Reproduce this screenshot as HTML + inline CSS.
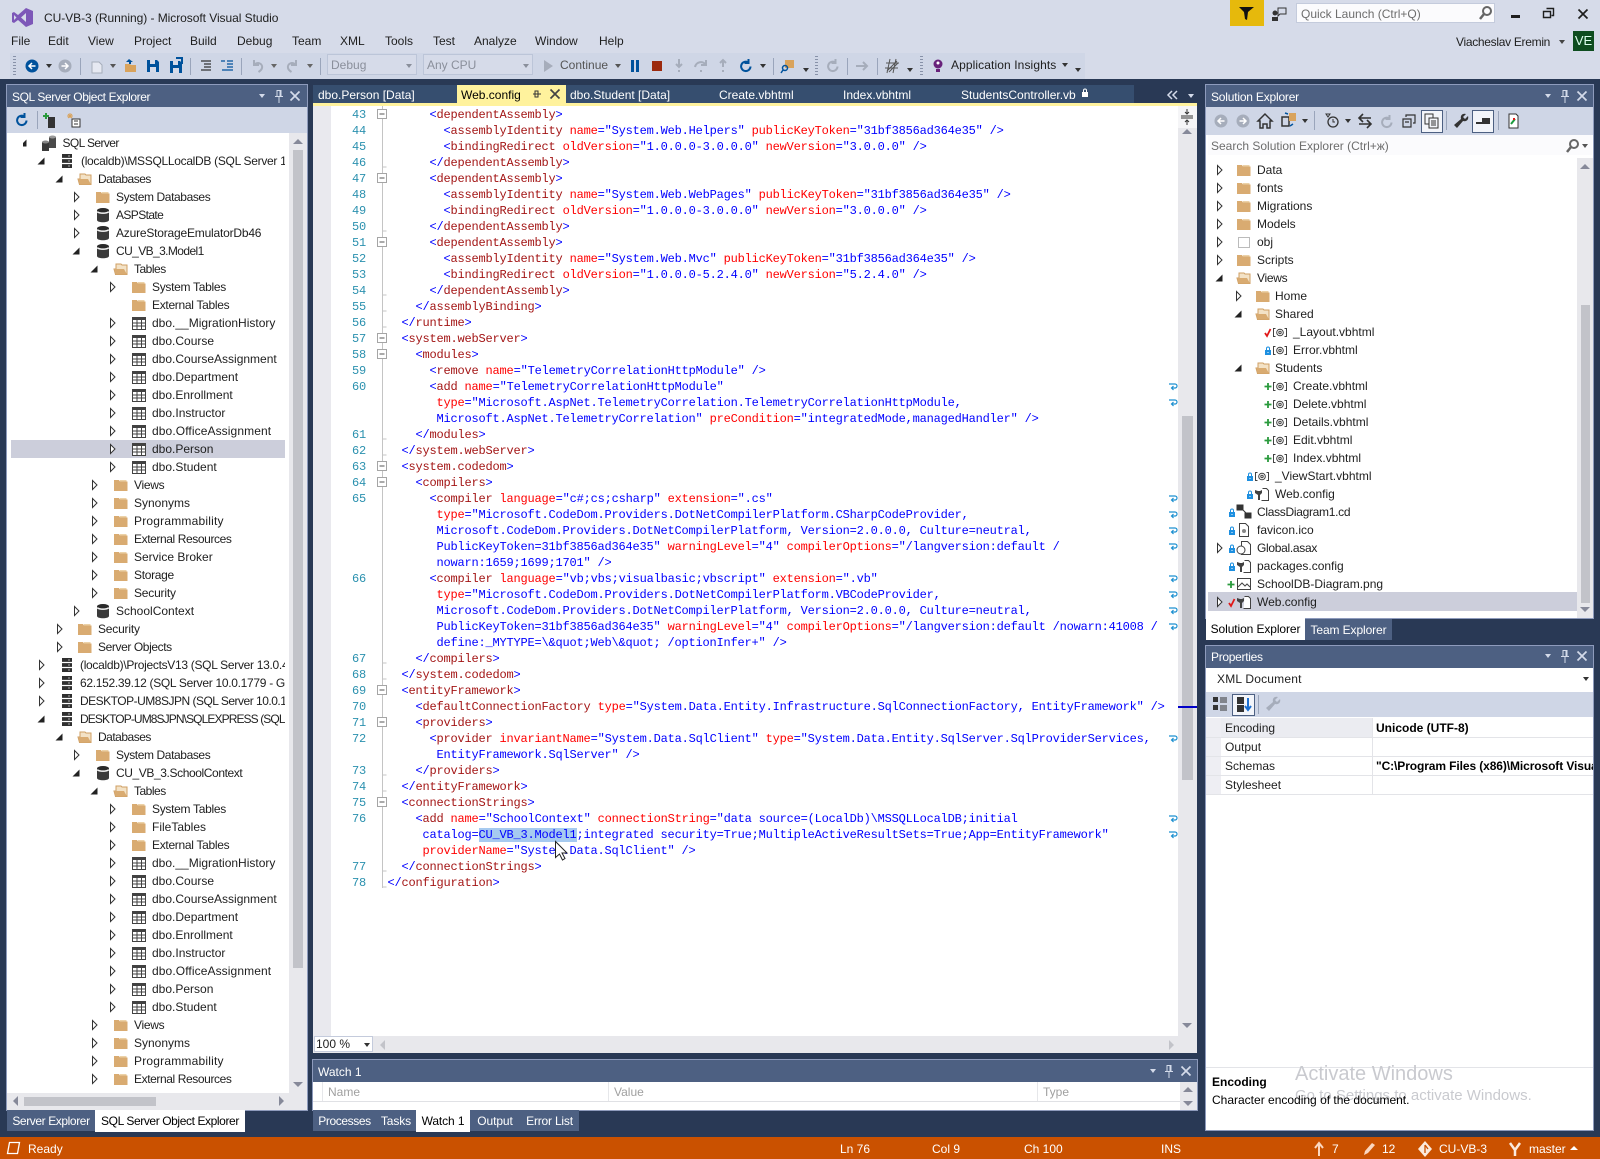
<!DOCTYPE html>
<html><head><meta charset="utf-8"><title>CU-VB-3 (Running) - Microsoft Visual Studio</title>
<style>
html,body{margin:0;padding:0;width:1600px;height:1159px;overflow:hidden;background:#293955}
body{position:relative;font:12px/16px "Liberation Sans",sans-serif;color:#1e1e1e}
.a,.w{position:absolute;white-space:pre}
.p{position:absolute}
svg{position:absolute;overflow:visible}
.ti{position:absolute;height:22px;background:#4d6082;color:#fff;line-height:22px;padding-left:5px;box-sizing:border-box;white-space:pre}
.ti.d{line-height:24px}
.bd{position:absolute;background:#fff;box-shadow:0 0 0 1px #8e9bbc}
.tr>div{position:relative;height:18px;line-height:18px;white-space:pre}
.tr svg{top:1px}
.tr b{font-weight:normal;position:absolute;top:0}
.tr b.n2{letter-spacing:-.2px}.tr b.n3{letter-spacing:-.3px}.tr b.n4{letter-spacing:-.4px}.tr b.n5{letter-spacing:-.5px}.tr b.n6{letter-spacing:-.6px}.tr b.n9{letter-spacing:-.9px}
.tab{position:absolute;top:1110px;height:21px;line-height:23px;color:#fff;background:#4d6082;white-space:pre;text-align:center;letter-spacing:-.1px}
.tab.on{background:#fff;color:#000;top:1110px;height:22px}
.code{position:absolute;left:387.5px;top:107px;font:12px/16px "Liberation Mono",monospace;letter-spacing:-.2px;color:#00f}
.code div{height:16px;white-space:pre;position:relative}
.code b{font-weight:normal;color:#a31515}
.code u{text-decoration:none;color:#f00}
.code em{font-style:normal;position:absolute;right:100%;margin-right:21.5px;color:#2b91af}
.code mark{background:#a6caf0;color:#00f}
.st{position:absolute;top:1141px;color:#fff;white-space:pre}
.pr{position:absolute;left:1225px;height:19px;line-height:20px;white-space:pre}
.pv{position:absolute;left:1376px;height:19px;line-height:20px;white-space:pre;font-weight:bold;width:217px;overflow:hidden;color:#000}
</style></head><body>
<svg width="0" height="0" style="position:absolute">
<symbol id="dd" overflow="visible"><path d="M5 6h6l-3 4z" fill="currentColor"/></symbol>
<symbol id="pin" overflow="visible"><path d="M6 2.5h4v6H6zM4 8.500h8M8 9v6M9 3v5" fill="none" stroke="currentColor"/></symbol>
<symbol id="xx" overflow="visible"><path d="M3.500 3.500l9 9M12.500 3.500l-9 9" fill="none" stroke="currentColor" stroke-width="1.700"/></symbol>
<symbol id="ac" overflow="visible"><path d="M6.500 3.500l4.500 4.500-4.500 4.500z" fill="#fff" stroke="#333"/></symbol>
<symbol id="ao" overflow="visible"><path d="M11.500 4.500v7h-7z" fill="#222"/></symbol>
<symbol id="f" overflow="visible"><path d="M1 3h5l1 1.500h7.500V14H1z" fill="#d9ab71"/><path d="M7 3h6.500v1.500H7z" fill="#ecd2a8"/></symbol>
<symbol id="fo" overflow="visible"><path d="M3 3h5l1 1h5v9.500H2.500L1 8h2z" fill="#f3e2c6" stroke="#cf9f63"/><path d="M1 8h10l3 5.500H3z" fill="#d9ab71"/></symbol>
<symbol id="db" overflow="visible"><ellipse cx="8" cy="3.500" rx="6" ry="2.500" fill="#2a2a2a"/><path d="M2 5v8c0 3 12 3 12 0V5c0 2.500-12 2.500-12 0z" fill="#3a3a3a"/><path d="M3 4.800c2 1.500 8 1.500 10 0" stroke="#eee" fill="none"/></symbol>
<symbol id="tb" overflow="visible"><path d="M1.500 2.500h13v12h-13z" fill="#fff" stroke="#424242"/><path d="M1 2h14v3H1z" fill="#424242"/><path d="M6 2v12M10.500 2v12M2 8h12M2 11h12" stroke="#424242"/></symbol>
<symbol id="sv" overflow="visible"><path d="M3 1h10v14H3z" fill="#2f2f2f"/><path d="M3 5.500h10M3 10.500h10" stroke="#fff" stroke-width="1.300"/><path d="M9 3h2M9 8h2M9 13h2" stroke="#aaa"/></symbol>
<symbol id="sg" overflow="visible"><path d="M1 7h7v9H1z" fill="#3a3a3a"/><ellipse cx="4.500" cy="7" rx="3.500" ry="1.500" fill="#888"/><path d="M8 2h7v11H8z" fill="#4a4a4a"/><ellipse cx="11.500" cy="2" rx="3.500" ry="1.500" fill="#999"/></symbol>
<symbol id="vb" overflow="visible"><path d="M3.500 4.500H1.500v8h2M12.500 4.500h2v8h-2" fill="none" stroke="#424242"/><circle cx="8" cy="8.500" r="3.300" fill="none" stroke="#424242"/><circle cx="8" cy="8.500" r="1.200" fill="none" stroke="#424242"/></symbol>
<symbol id="pl" overflow="visible"><path d="M5 1v7M1.500 4.500h7" stroke="#2a9a3c" stroke-width="1.800"/></symbol>
<symbol id="ck" overflow="visible"><path d="M1 5l2 3 3.500-7" fill="none" stroke="#e01818" stroke-width="1.800"/></symbol>
<symbol id="lk" overflow="visible"><path d="M1 4h6v5H1z" fill="#1d8fe0"/><path d="M2.500 4V2.500a1.500 1.500 0 0 1 3 0V4" fill="none" stroke="#1d8fe0"/><path d="M3.500 6h1v1h-1z" fill="#fff"/></symbol>
<symbol id="wc" overflow="visible"><path d="M8.500 2.500h4l2 2v10h-7" fill="#fff" stroke="#424242"/><path d="M1 4v3l3 2v5h2V9l2-2V4L6 5H4z" fill="#424242"/></symbol>
<symbol id="bx" overflow="visible"><path d="M.5.500h9v9h-9z" fill="#fff" stroke="#a5a5a5"/><path d="M2.500 5h5" stroke="#555"/></symbol>
<symbol id="wr" overflow="visible"><path d="M0 2h6a2 2 0 0 1 0 4H3M4.500 4l-2 2 2 2" fill="none" stroke="#1e90d0" stroke-width="1.200"/></symbol>
<symbol id="cb" overflow="visible"><circle cx="8" cy="8" r="6.500" fill="currentColor"/><path d="M11.500 8H6M8 5L5 8l3 3" stroke="#fff" stroke-width="1.500" fill="none"/></symbol>
<symbol id="cf" overflow="visible"><circle cx="8" cy="8" r="6.500" fill="currentColor"/><path d="M4.500 8H10M8 5l3 3-3 3" stroke="#fff" stroke-width="1.500" fill="none"/></symbol>
<symbol id="rf" overflow="visible"><path d="M12.500 8.500a4.700 4.700 0 1 1-2-4M10.500 1v4h-4" fill="none" stroke="currentColor" stroke-width="2"/></symbol>
<symbol id="un" overflow="visible"><path d="M4 2v5h5M4 7c4-4 9-1 8 3-.4 2-2 3-3.500 4" fill="none" stroke="currentColor" stroke-width="2"/></symbol>
<symbol id="re" overflow="visible"><path d="M12 2v5H7M12 7c-4-4-9-1-8 3 .4 2 2 3 3.500 4" fill="none" stroke="currentColor" stroke-width="2"/></symbol>
<symbol id="sa" overflow="visible"><path d="M2 2h10l2 2v10H2z" fill="#00529c"/><path d="M5 2h5v4H5zM5 9h6v5H5z" fill="#d6dbe9"/></symbol>
<symbol id="op" overflow="visible"><path d="M2 6h5l1 1h5v7H2z" fill="#d9a35c"/><path d="M6 1l4 3H8v2H6V4H3z" fill="#00529c"/></symbol>
</svg>

<!-- title area -->
<div class="p" style="left:0;top:0;width:1600px;height:79px;background:#d6dbe9"></div>
<svg style="left:12px;top:7px" width="22" height="21"><path d="M14 1l7 3v13l-7 3-8-7-4 3-2-1V6l2-1 4 3z M14 6L9 10.500l5 4.500z M2 8v5l2.500-2.500z" fill="#7d57b8" fill-rule="evenodd"/></svg>
<div class="w" style="left:44px;top:10px;letter-spacing:-.05px">CU-VB-3 (Running) - Microsoft Visual Studio</div>
<div class="w" style="left:11px;top:33px">File</div><div class="w" style="left:48px;top:33px">Edit</div><div class="w" style="left:88px;top:33px">View</div><div class="w" style="left:134px;top:33px">Project</div><div class="w" style="left:190px;top:33px">Build</div><div class="w" style="left:237px;top:33px">Debug</div><div class="w" style="left:292px;top:33px">Team</div><div class="w" style="left:340px;top:33px">XML</div><div class="w" style="left:385px;top:33px">Tools</div><div class="w" style="left:433px;top:33px">Test</div><div class="w" style="left:474px;top:33px">Analyze</div><div class="w" style="left:535px;top:33px">Window</div><div class="w" style="left:599px;top:33px">Help</div>

<div class="p" style="left:1230px;top:0;width:34px;height:26px;background:#e6b90c"></div>
<svg style="left:1238px;top:5px" width="18" height="16"><path d="M1 2h15l-6 5-1 8-2-1-1-7z" fill="#111"/></svg>
<svg style="left:1271px;top:6px" width="16" height="16"><path d="M7 2h8v6H9L7 10z" fill="none" stroke="#333"/><circle cx="4" cy="7" r="2.500" fill="#333"/><path d="M1 11h6v4H1z" fill="#333"/></svg>
<div class="p" style="left:1296px;top:3px;width:199px;height:20px;background:#fbfbfd;border:1px solid #c4cbdc;box-sizing:border-box"></div>
<div class="w" style="left:1301px;top:6px;color:#6d6d6d">Quick Launch (Ctrl+Q)</div>
<svg style="left:1478px;top:5px" width="16" height="16"><circle cx="9" cy="6" r="4" fill="none" stroke="#666" stroke-width="2"/><path d="M6 9l-4 5" stroke="#666" stroke-width="2.500"/></svg>
<div class="p" style="left:1511px;top:15px;width:9px;height:3px;background:#1e1e1e"></div>
<svg style="left:1543px;top:7px" width="14" height="14"><path d="M3.500 1.500h7v7h-2M.5 4.500h7v6h-7z" fill="none" stroke="#1e1e1e" stroke-width="1.400"/></svg>
<svg style="left:1575px;top:6px;color:#1e1e1e" width="16" height="16"><use href="#xx"/></svg>
<div class="w" style="left:1456px;top:34px;letter-spacing:-.3px">Viacheslav Eremin</div>
<svg style="left:1554px;top:34px;color:#444" width="16" height="16"><use href="#dd"/></svg>
<div class="p" style="left:1573px;top:31px;width:21px;height:20px;background:#0e4d1f;color:#dfe;text-align:center;line-height:20px;font-size:13px">VE</div>

<!-- main toolbar -->
<div class="p" style="left:10px;top:53px;width:1075px;height:26px;background:#cfd6e6"></div>
<div class="p" style="left:13px;top:56px;width:3px;height:19px;background:repeating-linear-gradient(#8791a8 0 1px,transparent 1px 3px)"></div>
<div class="p" style="left:815px;top:56px;width:3px;height:19px;background:repeating-linear-gradient(#8791a8 0 1px,transparent 1px 3px)"></div>
<div class="p" style="left:920px;top:56px;width:3px;height:19px;background:repeating-linear-gradient(#8791a8 0 1px,transparent 1px 3px)"></div>
<svg style="left:24px;top:58px;color:#00529c" width="16" height="16"><use href="#cb"/></svg>
<svg style="left:41px;top:58px;color:#333" width="16" height="16"><use href="#dd"/></svg>
<svg style="left:57px;top:58px;color:#a6adbb" width="16" height="16"><use href="#cf"/></svg>
<div class="p" style="left:80px;top:58px;width:1px;height:17px;background:#9aa5bb"></div>
<svg style="left:89px;top:58px" width="16" height="16"><path d="M3 4h7l3 3v8H3z" fill="#e6e9f2" stroke="#a6adbb"/></svg>
<svg style="left:105px;top:58px;color:#555" width="16" height="16"><use href="#dd"/></svg>
<svg style="left:123px;top:58px" width="16" height="16"><use href="#op"/></svg>
<svg style="left:145px;top:58px" width="16" height="16"><use href="#sa"/></svg>
<svg style="left:167px;top:58px" width="16" height="16"><use href="#sa" transform="translate(1 1)"/><path d="M9 0h6v6" fill="none" stroke="#00529c" stroke-width="2"/></svg>
<div class="p" style="left:190px;top:58px;width:1px;height:17px;background:#9aa5bb"></div>
<svg style="left:198px;top:58px" width="16" height="16"><path d="M3 3h10M6 6h7M6 9h7M3 12h10" stroke="#333" stroke-width="1.300"/></svg>
<svg style="left:219px;top:58px" width="16" height="16"><path d="M2 3h4M8 3h6M8 6h6M8 9h6M3 12h11" stroke="#00529c" stroke-width="1.300"/></svg>
<div class="p" style="left:241px;top:58px;width:1px;height:17px;background:#9aa5bb"></div>
<svg style="left:250px;top:58px;color:#a6adbb" width="16" height="16"><use href="#un"/></svg>
<svg style="left:266px;top:58px;color:#666" width="16" height="16"><use href="#dd"/></svg>
<svg style="left:284px;top:58px;color:#a6adbb" width="16" height="16"><use href="#re"/></svg>
<svg style="left:302px;top:58px;color:#666" width="16" height="16"><use href="#dd"/></svg>
<div class="p" style="left:320px;top:58px;width:1px;height:17px;background:#9aa5bb"></div>
<div class="p" style="left:327px;top:54px;width:90px;height:21px;border:1px solid #bcc5d8;box-sizing:border-box;background:#d6dbe9"></div>
<div class="w" style="left:331px;top:57px;color:#8a8f9b">Debug</div>
<svg style="left:401px;top:58px;color:#8a8f9b" width="16" height="16"><use href="#dd"/></svg>
<div class="p" style="left:423px;top:54px;width:110px;height:21px;border:1px solid #bcc5d8;box-sizing:border-box;background:#d6dbe9"></div>
<div class="w" style="left:427px;top:57px;color:#8a8f9b">Any CPU</div>
<svg style="left:518px;top:58px;color:#8a8f9b" width="16" height="16"><use href="#dd"/></svg>
<svg style="left:540px;top:58px" width="16" height="16"><path d="M4 2l9 6-9 6z" fill="#a6adbb"/></svg>
<div class="w" style="left:560px;top:57px;color:#555">Continue</div>
<svg style="left:610px;top:58px;color:#555" width="16" height="16"><use href="#dd"/></svg>
<div class="p" style="left:631px;top:60px;width:3px;height:12px;background:#00529c"></div><div class="p" style="left:636px;top:60px;width:3px;height:12px;background:#00529c"></div>
<div class="p" style="left:652px;top:61px;width:10px;height:10px;background:#9c2a0e"></div>
<svg style="left:671px;top:58px" width="16" height="16"><path d="M8 1v8M5 6l3 3 3-3M8 12v2" stroke="#a6adbb" stroke-width="2" fill="none"/></svg>
<svg style="left:693px;top:58px" width="16" height="16"><path d="M2 9a6 6 0 0 1 11-2M13 2v5H8M8 12v2" stroke="#a6adbb" stroke-width="2" fill="none"/></svg>
<svg style="left:715px;top:58px" width="16" height="16"><path d="M8 9V2M5 5l3-3 3 3M8 12v2" stroke="#a6adbb" stroke-width="2" fill="none"/></svg>
<svg style="left:738px;top:58px;color:#00529c" width="16" height="16"><use href="#rf"/></svg>
<svg style="left:755px;top:58px;color:#333" width="16" height="16"><use href="#dd"/></svg>
<div class="p" style="left:773px;top:58px;width:1px;height:17px;background:#9aa5bb"></div>
<svg style="left:780px;top:58px" width="16" height="16"><path d="M5 2h9v8H5z" fill="#d9a35c"/><circle cx="5" cy="10" r="2.500" fill="none" stroke="#00529c" stroke-width="1.500"/><path d="M3 12l-2 3" stroke="#00529c" stroke-width="1.500"/></svg>
<svg style="left:798px;top:62px;color:#333" width="16" height="16"><use href="#dd"/></svg>
<svg style="left:825px;top:58px;color:#a6adbb" width="16" height="16"><use href="#rf"/></svg>
<div class="p" style="left:847px;top:58px;width:1px;height:17px;background:#9aa5bb"></div>
<svg style="left:854px;top:58px" width="16" height="16"><path d="M2 8h11M9 4l4 4-4 4" fill="none" stroke="#a6adbb" stroke-width="2"/></svg>
<div class="p" style="left:877px;top:58px;width:1px;height:17px;background:#9aa5bb"></div>
<svg style="left:884px;top:58px" width="16" height="16"><path d="M2 5h13M1 10h13M6 1L3 15M12 1L9 15M3 13L13 3M5 14L14 5" stroke="#555" stroke-width="1" fill="none"/></svg>
<svg style="left:902px;top:62px;color:#333" width="16" height="16"><use href="#dd"/></svg>
<svg style="left:930px;top:58px" width="16" height="16"><circle cx="8" cy="6" r="4.500" fill="#68217a"/><path d="M6 11h4v3H6z" fill="#68217a"/><circle cx="8" cy="5" r="1.500" fill="#fff"/></svg>
<div class="w" style="left:951px;top:57px;letter-spacing:.1px">Application Insights</div>
<svg style="left:1057px;top:57px;color:#333" width="16" height="16"><use href="#dd"/></svg>
<svg style="left:1070px;top:62px;color:#333" width="16" height="16"><use href="#dd"/></svg>

<!-- left panel -->
<div class="bd" style="left:7px;top:85px;width:300px;height:1025px"></div>
<div class="ti d" style="left:7px;top:85px;width:300px;letter-spacing:-.39px">SQL Server Object Explorer</div>
<svg style="left:254px;top:88px;color:#d4dbea" width="16" height="16"><use href="#dd"/></svg>
<svg style="left:271px;top:88px;color:#d4dbea" width="16" height="16"><use href="#pin"/></svg>
<svg style="left:287px;top:88px;color:#d4dbea" width="16" height="16"><use href="#xx"/></svg>
<div class="p" style="left:7px;top:107px;width:300px;height:26px;background:#cfd6e6"></div>
<svg style="left:14px;top:112px;color:#00529c" width="16" height="16"><use href="#rf"/></svg>
<div class="p" style="left:37px;top:111px;width:1px;height:18px;background:#9aa5bb"></div>
<svg style="left:43px;top:112px" width="16" height="16"><path d="M5 5h7v11H5z" fill="#333"/><path d="M3 1v6M0 4h6" stroke="#2a9a3c" stroke-width="2"/></svg>
<svg style="left:66px;top:112px" width="16" height="16"><path d="M6 7h8v8H6z" fill="#fff" stroke="#333"/><path d="M8 9h4M8 12h4" stroke="#333"/><path d="M4 1v5M1 4h6M2 2l4 4M6 2L2 6" stroke="#d9a35c"/></svg>
<div class="p" style="left:11px;top:440px;width:274px;height:18px;background:#ccceDB"></div>

<div class="p tr" style="left:23px;top:134px;width:262px;height:959px;overflow:hidden" id="lt">
<div><svg style="left:-8px" width="16" height="16"><use href="#ao"/></svg><svg style="left:18px" width="16" height="16"><use href="#sg"/></svg><b class="n6" style="left:39.500px">SQL Server</b></div>
<div><svg style="left:10px" width="16" height="16"><use href="#ao"/></svg><svg style="left:36px" width="16" height="16"><use href="#sv"/></svg><b class="n3" style="left:58px">(localdb)\MSSQLLocalDB (SQL Server 1</b></div>
<div><svg style="left:28px" width="16" height="16"><use href="#ao"/></svg><svg style="left:54px" width="16" height="16"><use href="#fo"/></svg><b class="n5" style="left:75px">Databases</b></div>
<div><svg style="left:45px" width="16" height="16"><use href="#ac"/></svg><svg style="left:72px" width="16" height="16"><use href="#f"/></svg><b class="n4" style="left:93px">System Databases</b></div>
<div><svg style="left:45px" width="16" height="16"><use href="#ac"/></svg><svg style="left:72px" width="16" height="16"><use href="#db"/></svg><b class="n6" style="left:93px">ASPState</b></div>
<div><svg style="left:45px" width="16" height="16"><use href="#ac"/></svg><svg style="left:72px" width="16" height="16"><use href="#db"/></svg><b class="n2" style="left:93px">AzureStorageEmulatorDb46</b></div>
<div><svg style="left:45px" width="16" height="16"><use href="#ao"/></svg><svg style="left:72px" width="16" height="16"><use href="#db"/></svg><b class="n6" style="left:93px">CU_VB_3.Model1</b></div>
<div><svg style="left:63px" width="16" height="16"><use href="#ao"/></svg><svg style="left:90px" width="16" height="16"><use href="#fo"/></svg><b class="n5" style="left:111px">Tables</b></div>
<div><svg style="left:81px" width="16" height="16"><use href="#ac"/></svg><svg style="left:108px" width="16" height="16"><use href="#f"/></svg><b class="n3" style="left:129px">System Tables</b></div>
<div><svg style="left:108px" width="16" height="16"><use href="#f"/></svg><b class="n3" style="left:129px">External Tables</b></div>
<div><svg style="left:81px" width="16" height="16"><use href="#ac"/></svg><svg style="left:108px" width="16" height="16"><use href="#tb"/></svg><b style="left:129px">dbo.__MigrationHistory</b></div>
<div><svg style="left:81px" width="16" height="16"><use href="#ac"/></svg><svg style="left:108px" width="16" height="16"><use href="#tb"/></svg><b style="left:129px">dbo.Course</b></div>
<div><svg style="left:81px" width="16" height="16"><use href="#ac"/></svg><svg style="left:108px" width="16" height="16"><use href="#tb"/></svg><b style="left:129px">dbo.CourseAssignment</b></div>
<div><svg style="left:81px" width="16" height="16"><use href="#ac"/></svg><svg style="left:108px" width="16" height="16"><use href="#tb"/></svg><b style="left:129px">dbo.Department</b></div>
<div><svg style="left:81px" width="16" height="16"><use href="#ac"/></svg><svg style="left:108px" width="16" height="16"><use href="#tb"/></svg><b style="left:129px">dbo.Enrollment</b></div>
<div><svg style="left:81px" width="16" height="16"><use href="#ac"/></svg><svg style="left:108px" width="16" height="16"><use href="#tb"/></svg><b style="left:129px">dbo.Instructor</b></div>
<div><svg style="left:81px" width="16" height="16"><use href="#ac"/></svg><svg style="left:108px" width="16" height="16"><use href="#tb"/></svg><b style="left:129px;letter-spacing:.1px">dbo.OfficeAssignment</b></div>
<div><svg style="left:81px" width="16" height="16"><use href="#ac"/></svg><svg style="left:108px" width="16" height="16"><use href="#tb"/></svg><b style="left:129px">dbo.Person</b></div>
<div><svg style="left:81px" width="16" height="16"><use href="#ac"/></svg><svg style="left:108px" width="16" height="16"><use href="#tb"/></svg><b style="left:129px">dbo.Student</b></div>
<div><svg style="left:63px" width="16" height="16"><use href="#ac"/></svg><svg style="left:90px" width="16" height="16"><use href="#f"/></svg><b class="n3" style="left:111px">Views</b></div>
<div><svg style="left:63px" width="16" height="16"><use href="#ac"/></svg><svg style="left:90px" width="16" height="16"><use href="#f"/></svg><b style="left:111px">Synonyms</b></div>
<div><svg style="left:63px" width="16" height="16"><use href="#ac"/></svg><svg style="left:90px" width="16" height="16"><use href="#f"/></svg><b style="left:111px;letter-spacing:.2px">Programmability</b></div>
<div><svg style="left:63px" width="16" height="16"><use href="#ac"/></svg><svg style="left:90px" width="16" height="16"><use href="#f"/></svg><b class="n4" style="left:111px">External Resources</b></div>
<div><svg style="left:63px" width="16" height="16"><use href="#ac"/></svg><svg style="left:90px" width="16" height="16"><use href="#f"/></svg><b style="left:111px">Service Broker</b></div>
<div><svg style="left:63px" width="16" height="16"><use href="#ac"/></svg><svg style="left:90px" width="16" height="16"><use href="#f"/></svg><b class="n3" style="left:111px">Storage</b></div>
<div><svg style="left:63px" width="16" height="16"><use href="#ac"/></svg><svg style="left:90px" width="16" height="16"><use href="#f"/></svg><b class="n2" style="left:111px">Security</b></div>
<div><svg style="left:45px" width="16" height="16"><use href="#ac"/></svg><svg style="left:72px" width="16" height="16"><use href="#db"/></svg><b style="left:93px">SchoolContext</b></div>
<div><svg style="left:28px" width="16" height="16"><use href="#ac"/></svg><svg style="left:54px" width="16" height="16"><use href="#f"/></svg><b class="n2" style="left:75px">Security</b></div>
<div><svg style="left:28px" width="16" height="16"><use href="#ac"/></svg><svg style="left:54px" width="16" height="16"><use href="#f"/></svg><b class="n4" style="left:75px">Server Objects</b></div>
<div><svg style="left:10px" width="16" height="16"><use href="#ac"/></svg><svg style="left:36px" width="16" height="16"><use href="#sv"/></svg><b class="n3" style="left:57px">(localdb)\ProjectsV13 (SQL Server 13.0.4</b></div>
<div><svg style="left:10px" width="16" height="16"><use href="#ac"/></svg><svg style="left:36px" width="16" height="16"><use href="#sv"/></svg><b class="n3" style="left:57px">62.152.39.12 (SQL Server 10.0.1779 - Gra</b></div>
<div><svg style="left:10px" width="16" height="16"><use href="#ac"/></svg><svg style="left:36px" width="16" height="16"><use href="#sv"/></svg><b class="n5" style="left:57px">DESKTOP-UM8SJPN (SQL Server 10.0.16</b></div>
<div><svg style="left:10px" width="16" height="16"><use href="#ao"/></svg><svg style="left:36px" width="16" height="16"><use href="#sv"/></svg><b class="n9" style="left:57px">DESKTOP-UM8SJPN\SQLEXPRESS (SQL</b></div>
<div><svg style="left:28px" width="16" height="16"><use href="#ao"/></svg><svg style="left:54px" width="16" height="16"><use href="#fo"/></svg><b class="n5" style="left:75px">Databases</b></div>
<div><svg style="left:45px" width="16" height="16"><use href="#ac"/></svg><svg style="left:72px" width="16" height="16"><use href="#f"/></svg><b class="n4" style="left:93px">System Databases</b></div>
<div><svg style="left:45px" width="16" height="16"><use href="#ao"/></svg><svg style="left:72px" width="16" height="16"><use href="#db"/></svg><b class="n4" style="left:93px">CU_VB_3.SchoolContext</b></div>
<div><svg style="left:63px" width="16" height="16"><use href="#ao"/></svg><svg style="left:90px" width="16" height="16"><use href="#fo"/></svg><b class="n5" style="left:111px">Tables</b></div>
<div><svg style="left:81px" width="16" height="16"><use href="#ac"/></svg><svg style="left:108px" width="16" height="16"><use href="#f"/></svg><b class="n3" style="left:129px">System Tables</b></div>
<div><svg style="left:81px" width="16" height="16"><use href="#ac"/></svg><svg style="left:108px" width="16" height="16"><use href="#f"/></svg><b style="left:129px">FileTables</b></div>
<div><svg style="left:81px" width="16" height="16"><use href="#ac"/></svg><svg style="left:108px" width="16" height="16"><use href="#f"/></svg><b class="n3" style="left:129px">External Tables</b></div>
<div><svg style="left:81px" width="16" height="16"><use href="#ac"/></svg><svg style="left:108px" width="16" height="16"><use href="#tb"/></svg><b style="left:129px">dbo.__MigrationHistory</b></div>
<div><svg style="left:81px" width="16" height="16"><use href="#ac"/></svg><svg style="left:108px" width="16" height="16"><use href="#tb"/></svg><b style="left:129px">dbo.Course</b></div>
<div><svg style="left:81px" width="16" height="16"><use href="#ac"/></svg><svg style="left:108px" width="16" height="16"><use href="#tb"/></svg><b style="left:129px">dbo.CourseAssignment</b></div>
<div><svg style="left:81px" width="16" height="16"><use href="#ac"/></svg><svg style="left:108px" width="16" height="16"><use href="#tb"/></svg><b style="left:129px">dbo.Department</b></div>
<div><svg style="left:81px" width="16" height="16"><use href="#ac"/></svg><svg style="left:108px" width="16" height="16"><use href="#tb"/></svg><b style="left:129px">dbo.Enrollment</b></div>
<div><svg style="left:81px" width="16" height="16"><use href="#ac"/></svg><svg style="left:108px" width="16" height="16"><use href="#tb"/></svg><b style="left:129px">dbo.Instructor</b></div>
<div><svg style="left:81px" width="16" height="16"><use href="#ac"/></svg><svg style="left:108px" width="16" height="16"><use href="#tb"/></svg><b style="left:129px;letter-spacing:.1px">dbo.OfficeAssignment</b></div>
<div><svg style="left:81px" width="16" height="16"><use href="#ac"/></svg><svg style="left:108px" width="16" height="16"><use href="#tb"/></svg><b style="left:129px">dbo.Person</b></div>
<div><svg style="left:81px" width="16" height="16"><use href="#ac"/></svg><svg style="left:108px" width="16" height="16"><use href="#tb"/></svg><b style="left:129px">dbo.Student</b></div>
<div><svg style="left:63px" width="16" height="16"><use href="#ac"/></svg><svg style="left:90px" width="16" height="16"><use href="#f"/></svg><b class="n3" style="left:111px">Views</b></div>
<div><svg style="left:63px" width="16" height="16"><use href="#ac"/></svg><svg style="left:90px" width="16" height="16"><use href="#f"/></svg><b style="left:111px">Synonyms</b></div>
<div><svg style="left:63px" width="16" height="16"><use href="#ac"/></svg><svg style="left:90px" width="16" height="16"><use href="#f"/></svg><b style="left:111px;letter-spacing:.2px">Programmability</b></div>
<div><svg style="left:63px" width="16" height="16"><use href="#ac"/></svg><svg style="left:90px" width="16" height="16"><use href="#f"/></svg><b class="n4" style="left:111px">External Resources</b></div>
</div>
<!-- left scrollbars -->
<div class="p" style="left:289px;top:133px;width:18px;height:960px;background:#e8e8ec"></div>
<div class="p" style="left:293px;top:150px;width:10px;height:818px;background:#c2c3c9"></div>
<svg style="left:290px;top:134px;color:#868999" width="16" height="16"><path d="M3 10l5-5 5 5z" fill="currentColor"/></svg>
<svg style="left:290px;top:1077px;color:#868999" width="16" height="16"><path d="M3 5l5 5 5-5z" fill="currentColor"/></svg>
<div class="p" style="left:7px;top:1093px;width:300px;height:17px;background:#e8e8ec"></div>
<div class="p" style="left:24px;top:1097px;width:132px;height:9px;background:#c2c3c9"></div>
<svg style="left:7px;top:1093px;color:#868999" width="16" height="16"><path d="M11 3L6 8l5 5z" fill="currentColor"/></svg>
<svg style="left:273px;top:1093px;color:#868999" width="16" height="16"><path d="M6 3l5 5-5 5z" fill="currentColor"/></svg>
<div class="tab" style="left:7px;width:88px;letter-spacing:-.4px">Server Explorer</div>
<div class="tab on" style="left:95px;width:150px;letter-spacing:-.4px">SQL Server Object Explorer</div>

<!-- editor tabs -->
<div class="p" style="left:313px;top:85px;width:821px;height:18px;background:#364e6f"></div>
<div class="p" style="left:457px;top:85px;width:109px;height:18px;background:#fff29d"></div>
<div class="p" style="left:313px;top:103px;width:884px;height:3px;background:#fff29d"></div>
<div class="w" style="left:318px;top:87px;color:#fff">dbo.Person [Data]</div>
<div class="w" style="left:461px;top:87px;color:#000">Web.config</div>
<svg style="left:528px;top:86px;color:#444" width="16" height="16"><path d="M5 8h5M7 5v6h3V5zM10 8h3" stroke="#333" fill="none"/></svg>
<svg style="left:547px;top:86px;color:#444" width="16" height="16"><use href="#xx"/></svg>
<div class="w" style="left:570px;top:87px;color:#fff">dbo.Student [Data]</div>
<div class="w" style="left:719px;top:87px;color:#fff">Create.vbhtml</div>
<div class="w" style="left:843px;top:87px;color:#fff">Index.vbhtml</div>
<div class="w" style="left:961px;top:87px;color:#fff">StudentsController.vb</div>
<svg style="left:1081px;top:88px" width="10" height="10"><use href="#lk" style="filter:grayscale(1) brightness(3)"/></svg>
<svg style="left:1165px;top:87px" width="16" height="16"><path d="M7 4L3 8l4 4M12 4L8 8l4 4" fill="none" stroke="#d4dbea" stroke-width="1.500"/></svg>
<svg style="left:1183px;top:88px;color:#d4dbea" width="16" height="16"><use href="#dd"/></svg>

<!-- editor -->
<div class="p" style="left:313px;top:106px;width:884px;height:947px;background:#fff"></div>
<div class="p" style="left:313px;top:106px;width:18px;height:930px;background:#e9e9ee"></div>
<div class="code">
<div><em>43</em>      &lt;<b>dependentAssembly</b>&gt;</div>
<div><em>44</em>        &lt;<b>assemblyIdentity</b> <u>name</u>="System.Web.Helpers" <u>publicKeyToken</u>="31bf3856ad364e35" /&gt;</div>
<div><em>45</em>        &lt;<b>bindingRedirect</b> <u>oldVersion</u>="1.0.0.0-3.0.0.0" <u>newVersion</u>="3.0.0.0" /&gt;</div>
<div><em>46</em>      &lt;/<b>dependentAssembly</b>&gt;</div>
<div><em>47</em>      &lt;<b>dependentAssembly</b>&gt;</div>
<div><em>48</em>        &lt;<b>assemblyIdentity</b> <u>name</u>="System.Web.WebPages" <u>publicKeyToken</u>="31bf3856ad364e35" /&gt;</div>
<div><em>49</em>        &lt;<b>bindingRedirect</b> <u>oldVersion</u>="1.0.0.0-3.0.0.0" <u>newVersion</u>="3.0.0.0" /&gt;</div>
<div><em>50</em>      &lt;/<b>dependentAssembly</b>&gt;</div>
<div><em>51</em>      &lt;<b>dependentAssembly</b>&gt;</div>
<div><em>52</em>        &lt;<b>assemblyIdentity</b> <u>name</u>="System.Web.Mvc" <u>publicKeyToken</u>="31bf3856ad364e35" /&gt;</div>
<div><em>53</em>        &lt;<b>bindingRedirect</b> <u>oldVersion</u>="1.0.0.0-5.2.4.0" <u>newVersion</u>="5.2.4.0" /&gt;</div>
<div><em>54</em>      &lt;/<b>dependentAssembly</b>&gt;</div>
<div><em>55</em>    &lt;/<b>assemblyBinding</b>&gt;</div>
<div><em>56</em>  &lt;/<b>runtime</b>&gt;</div>
<div><em>57</em>  &lt;<b>system.webServer</b>&gt;</div>
<div><em>58</em>    &lt;<b>modules</b>&gt;</div>
<div><em>59</em>      &lt;<b>remove</b> <u>name</u>="TelemetryCorrelationHttpModule" /&gt;</div>
<div><em>60</em>      &lt;<b>add</b> <u>name</u>="TelemetryCorrelationHttpModule"</div>
<div>       <u>type</u>="Microsoft.AspNet.TelemetryCorrelation.TelemetryCorrelationHttpModule,</div>
<div>       Microsoft.AspNet.TelemetryCorrelation" <u>preCondition</u>="integratedMode,managedHandler" /&gt;</div>
<div><em>61</em>    &lt;/<b>modules</b>&gt;</div>
<div><em>62</em>  &lt;/<b>system.webServer</b>&gt;</div>
<div><em>63</em>  &lt;<b>system.codedom</b>&gt;</div>
<div><em>64</em>    &lt;<b>compilers</b>&gt;</div>
<div><em>65</em>      &lt;<b>compiler</b> <u>language</u>="c#;cs;csharp" <u>extension</u>=".cs"</div>
<div>       <u>type</u>="Microsoft.CodeDom.Providers.DotNetCompilerPlatform.CSharpCodeProvider,</div>
<div>       Microsoft.CodeDom.Providers.DotNetCompilerPlatform, Version=2.0.0.0, Culture=neutral,</div>
<div>       PublicKeyToken=31bf3856ad364e35" <u>warningLevel</u>="4" <u>compilerOptions</u>="/langversion:default /</div>
<div>       nowarn:1659;1699;1701" /&gt;</div>
<div><em>66</em>      &lt;<b>compiler</b> <u>language</u>="vb;vbs;visualbasic;vbscript" <u>extension</u>=".vb"</div>
<div>       <u>type</u>="Microsoft.CodeDom.Providers.DotNetCompilerPlatform.VBCodeProvider,</div>
<div>       Microsoft.CodeDom.Providers.DotNetCompilerPlatform, Version=2.0.0.0, Culture=neutral,</div>
<div>       PublicKeyToken=31bf3856ad364e35" <u>warningLevel</u>="4" <u>compilerOptions</u>="/langversion:default /nowarn:41008 /</div>
<div>       define:_MYTYPE=\&amp;quot;Web\&amp;quot; /optionInfer+" /&gt;</div>
<div><em>67</em>    &lt;/<b>compilers</b>&gt;</div>
<div><em>68</em>  &lt;/<b>system.codedom</b>&gt;</div>
<div><em>69</em>  &lt;<b>entityFramework</b>&gt;</div>
<div><em>70</em>    &lt;<b>defaultConnectionFactory</b> <u>type</u>="System.Data.Entity.Infrastructure.SqlConnectionFactory, EntityFramework" /&gt;</div>
<div><em>71</em>    &lt;<b>providers</b>&gt;</div>
<div><em>72</em>      &lt;<b>provider</b> <u>invariantName</u>="System.Data.SqlClient" <u>type</u>="System.Data.Entity.SqlServer.SqlProviderServices,</div>
<div>       EntityFramework.SqlServer" /&gt;</div>
<div><em>73</em>    &lt;/<b>providers</b>&gt;</div>
<div><em>74</em>  &lt;/<b>entityFramework</b>&gt;</div>
<div><em>75</em>  &lt;<b>connectionStrings</b>&gt;</div>
<div><em>76</em>    &lt;<b>add</b> <u>name</u>="SchoolContext" <u>connectionString</u>="data source=(LocalDb)\MSSQLLocalDB;initial</div>
<div>     catalog=<mark>CU_VB_3.Model1</mark>;integrated security=True;MultipleActiveResultSets=True;App=EntityFramework"</div>
<div>     <u>providerName</u>="System.Data.SqlClient" /&gt;</div>
<div><em>77</em>  &lt;/<b>connectionStrings</b>&gt;</div>
<div><em>78</em>&lt;/<b>configuration</b>&gt;</div>
</div>
<!-- outlining -->
<svg style="left:0;top:0" width="1600" height="1159">
<path d="M382.500 106V888M382.500 167h4M382.500 231h4M382.500 295h4M382.500 311h4M382.500 327h4M382.500 439h4M382.500 455h4M382.500 663h4M382.500 679h4M382.500 775h4M382.500 791h4M382.500 871h4M382.500 887h4" stroke="#c4c4c4" fill="none"/>
<use href="#bx" x="377" y="109"/><use href="#bx" x="377" y="173"/><use href="#bx" x="377" y="237"/><use href="#bx" x="377" y="333"/><use href="#bx" x="377" y="349"/><use href="#bx" x="377" y="461"/><use href="#bx" x="377" y="477"/><use href="#bx" x="377" y="685"/><use href="#bx" x="377" y="717"/><use href="#bx" x="377" y="797"/>
<use href="#wr" x="1169" y="382"/><use href="#wr" x="1169" y="398"/><use href="#wr" x="1169" y="494"/><use href="#wr" x="1169" y="510"/><use href="#wr" x="1169" y="526"/><use href="#wr" x="1169" y="542"/><use href="#wr" x="1169" y="574"/><use href="#wr" x="1169" y="590"/><use href="#wr" x="1169" y="606"/><use href="#wr" x="1169" y="622"/><use href="#wr" x="1169" y="734"/><use href="#wr" x="1169" y="814"/><use href="#wr" x="1169" y="830"/>
<path d="M555.500 841.500v16l4-3.500 3 6 2.500-1.500-3-5.500h5z" fill="#fff" stroke="#222"/>
</svg>
<!-- editor scrollbars -->
<div class="p" style="left:1178px;top:106px;width:19px;height:930px;background:#e8e8ec"></div>
<div class="p" style="left:1178px;top:106px;width:19px;height:22px;background:#f5f5f7"></div>
<svg style="left:1179px;top:108px" width="16" height="18"><path d="M2 8h12M2 10h12M8 1v5M6 4l2 2 2-2M8 17v-5M6 14l2-2 2 2" stroke="#333" fill="none"/></svg>
<svg style="left:1179px;top:124px;color:#868999" width="16" height="16"><path d="M3 10l5-5 5 5z" fill="currentColor"/></svg>
<div class="p" style="left:1182px;top:416px;width:11px;height:364px;background:#c2c3c9"></div>
<div class="p" style="left:1178px;top:706px;width:19px;height:2px;background:#0000c8"></div>
<svg style="left:1179px;top:1018px;color:#868999" width="16" height="16"><path d="M3 5l5 5 5-5z" fill="currentColor"/></svg>
<div class="p" style="left:313px;top:1036px;width:884px;height:17px;background:#e8e8ec"></div>
<div class="p" style="left:314px;top:1036px;width:59px;height:16px;background:#fff;border:1px solid #c4cbdc;box-sizing:border-box"></div>
<div class="w" style="left:316px;top:1036px">100 %</div>
<svg style="left:359px;top:1037px;color:#333" width="16" height="16"><use href="#dd"/></svg>
<svg style="left:376px;top:1037px" width="16" height="16"><path d="M9 3L4 8l5 5z" fill="#c2c3c9"/></svg>
<svg style="left:1163px;top:1037px" width="16" height="16"><path d="M6 3l5 5-5 5z" fill="#c2c3c9"/></svg>

<!-- watch -->
<div class="bd" style="left:313px;top:1060px;width:884px;height:50px"></div>
<div class="ti d" style="left:313px;top:1060px;width:884px">Watch 1</div>
<svg style="left:1145px;top:1063px;color:#d4dbea" width="16" height="16"><use href="#dd"/></svg>
<svg style="left:1161px;top:1063px;color:#d4dbea" width="16" height="16"><use href="#pin"/></svg>
<svg style="left:1178px;top:1063px;color:#d4dbea" width="16" height="16"><use href="#xx"/></svg>
<div class="p" style="left:322px;top:1082px;width:1px;height:20px;background:#e6e7ea"></div>
<div class="p" style="left:608px;top:1082px;width:1px;height:20px;background:#e6e7ea"></div>
<div class="p" style="left:1037px;top:1082px;width:1px;height:20px;background:#e6e7ea"></div>
<div class="p" style="left:313px;top:1101px;width:867px;height:1px;background:#e0e1e5"></div>
<div class="w" style="left:328px;top:1084px;color:#a0a0a0">Name</div>
<div class="w" style="left:614px;top:1084px;color:#a0a0a0">Value</div>
<div class="w" style="left:1043px;top:1084px;color:#a0a0a0">Type</div>
<div class="p" style="left:1180px;top:1082px;width:17px;height:28px;background:#e8e8ec"></div>
<svg style="left:1180px;top:1082px;color:#868999" width="16" height="16"><path d="M3 10l5-5 5 5z" fill="currentColor"/></svg>
<svg style="left:1180px;top:1096px;color:#868999" width="16" height="16"><path d="M3 5l5 5 5-5z" fill="currentColor"/></svg>
<div class="tab" style="left:313px;width:63px;letter-spacing:-.4px">Processes</div>
<div class="tab" style="left:376px;width:40px">Tasks</div>
<div class="tab on" style="left:416px;width:54px">Watch 1</div>
<div class="tab" style="left:470px;width:50px">Output</div>
<div class="tab" style="left:520px;width:59px;letter-spacing:-.2px">Error List</div>

<!-- solution explorer -->
<div class="bd" style="left:1206px;top:85px;width:387px;height:533px"></div>
<div class="ti d" style="left:1206px;top:85px;width:387px;letter-spacing:-.2px">Solution Explorer</div>
<svg style="left:1540px;top:88px;color:#d4dbea" width="16" height="16"><use href="#dd"/></svg>
<svg style="left:1557px;top:88px;color:#d4dbea" width="16" height="16"><use href="#pin"/></svg>
<svg style="left:1574px;top:88px;color:#d4dbea" width="16" height="16"><use href="#xx"/></svg>
<div class="p" style="left:1206px;top:107px;width:387px;height:28px;background:#cfd6e6"></div>
<svg style="left:1213px;top:113px;color:#a6adbb" width="16" height="16"><use href="#cb"/></svg>
<svg style="left:1235px;top:113px;color:#a6adbb" width="16" height="16"><use href="#cf"/></svg>
<svg style="left:1257px;top:113px" width="16" height="16"><path d="M8 1L1 8h2v7h3v-4h4v4h3V8h2z" fill="none" stroke="#333" stroke-width="1.500"/></svg>
<svg style="left:1281px;top:112px" width="16" height="16"><path d="M1 5h7v9H1z" fill="none" stroke="#333" stroke-width="1.500"/><path d="M8 1h7v8H8z" fill="#d9a35c"/><path d="M4 1l3 1M12 12l-3 2" stroke="#00529c" stroke-width="1.500"/></svg>
<svg style="left:1297px;top:113px;color:#333" width="16" height="16"><use href="#dd"/></svg>
<div class="p" style="left:1314px;top:111px;width:1px;height:19px;background:#9aa5bb"></div>
<svg style="left:1325px;top:113px" width="16" height="16"><circle cx="8" cy="9" r="5" fill="none" stroke="#333" stroke-width="1.300"/><path d="M8 6v3h2M1 1h4L3 4z" fill="none" stroke="#333"/></svg>
<svg style="left:1340px;top:113px;color:#333" width="16" height="16"><use href="#dd"/></svg>
<svg style="left:1357px;top:113px" width="16" height="16"><path d="M6 1L2 5l4 4M2 5h12M10 7l4 4-4 4M14 11H2" fill="none" stroke="#333" stroke-width="1.600"/></svg>
<svg style="left:1379px;top:114px;color:#a6adbb" width="16" height="16"><use href="#rf"/></svg>
<svg style="left:1401px;top:113px" width="16" height="16"><path d="M2 6h8v8H2zM5 4V2h9v8h-2M4 9h4" fill="none" stroke="#333" stroke-width="1.200"/></svg>
<div class="p" style="left:1421px;top:110px;width:22px;height:23px;background:#f3f5fa;border:1px solid #4d6082;box-sizing:border-box"></div>
<svg style="left:1424px;top:113px" width="16" height="16"><path d="M1 1h8v10H1z" fill="none" stroke="#333"/><path d="M5 5h9v10H5z" fill="#f3f5fa" stroke="#333"/><path d="M7 8h5M7 10h5M7 12h5" stroke="#333"/></svg>
<div class="p" style="left:1446px;top:111px;width:1px;height:19px;background:#9aa5bb"></div>
<svg style="left:1453px;top:113px" width="16" height="16"><path d="M15 3l-3 3-2-2 3-3c-3-1-6 1-5 5L1 12l3 3 6-7c4 1 6-2 5-5z" fill="#333"/></svg>
<div class="p" style="left:1472px;top:110px;width:22px;height:23px;background:#f3f5fa;border:1px solid #4d6082;box-sizing:border-box"></div>
<div class="p" style="left:1476px;top:122px;width:14px;height:2px;background:#333"></div><div class="p" style="left:1482px;top:118px;width:8px;height:5px;background:#333"></div>
<div class="p" style="left:1498px;top:111px;width:1px;height:19px;background:#9aa5bb"></div>
<svg style="left:1505px;top:113px" width="16" height="16"><path d="M4 1h7l2 2v12H4z" fill="#fff" stroke="#333"/><path d="M6 11l4-5" stroke="#1a9a3c" stroke-width="2"/><path d="M10 6l-2 0" stroke="#e01818" stroke-width="2"/></svg>
<div class="p" style="left:1208px;top:135px;width:384px;height:20px;background:#fbfbfd"></div>
<div class="w" style="left:1211px;top:138px;color:#6d6d6d">Search Solution Explorer (Ctrl+ж)</div>
<svg style="left:1565px;top:138px" width="16" height="16"><circle cx="9" cy="6" r="4" fill="none" stroke="#666" stroke-width="2"/><path d="M6 9l-4 5" stroke="#666" stroke-width="2.500"/></svg>
<svg style="left:1577px;top:138px;color:#555" width="16" height="16"><use href="#dd"/></svg>
<div class="p" style="left:1208px;top:592px;width:369px;height:19px;background:#ccceDB"></div>

<div class="p tr" style="left:1206px;top:161px;width:371px;height:457px;overflow:hidden">
<div><svg style="left:5px" width="16" height="16"><use href="#ac"/></svg><svg style="left:30px" width="16" height="16"><use href="#f"/></svg><b style="left:51px">Data</b></div>
<div><svg style="left:5px" width="16" height="16"><use href="#ac"/></svg><svg style="left:30px" width="16" height="16"><use href="#f"/></svg><b style="left:51px">fonts</b></div>
<div><svg style="left:5px" width="16" height="16"><use href="#ac"/></svg><svg style="left:30px" width="16" height="16"><use href="#f"/></svg><b style="left:51px">Migrations</b></div>
<div><svg style="left:5px" width="16" height="16"><use href="#ac"/></svg><svg style="left:30px" width="16" height="16"><use href="#f"/></svg><b style="left:51px">Models</b></div>
<div><svg style="left:5px" width="16" height="16"><use href="#ac"/></svg><svg style="left:30px" width="16" height="16"><path d="M2.500 3.500h11v10h-11z" fill="none" stroke="#777" stroke-dasharray="1 1"/></svg><b style="left:51px">obj</b></div>
<div><svg style="left:5px" width="16" height="16"><use href="#ac"/></svg><svg style="left:30px" width="16" height="16"><use href="#f"/></svg><b style="left:51px">Scripts</b></div>
<div><svg style="left:5px" width="16" height="16"><use href="#ao"/></svg><svg style="left:30px" width="16" height="16"><use href="#fo"/></svg><b class="n3" style="left:51px">Views</b></div>
<div><svg style="left:24px" width="16" height="16"><use href="#ac"/></svg><svg style="left:49px" width="16" height="16"><use href="#f"/></svg><b style="left:69px">Home</b></div>
<div><svg style="left:24px" width="16" height="16"><use href="#ao"/></svg><svg style="left:49px" width="16" height="16"><use href="#fo"/></svg><b style="left:69px">Shared</b></div>
<div><svg style="left:58px;top:5px" width="8" height="9"><use href="#ck"/></svg><svg style="left:66px" width="16" height="16"><use href="#vb"/></svg><b style="left:87px">_Layout.vbhtml</b></div>
<div><svg style="left:58px;top:5px" width="8" height="9"><use href="#lk"/></svg><svg style="left:66px" width="16" height="16"><use href="#vb"/></svg><b style="left:87px">Error.vbhtml</b></div>
<div><svg style="left:24px" width="16" height="16"><use href="#ao"/></svg><svg style="left:49px" width="16" height="16"><use href="#fo"/></svg><b style="left:69px">Students</b></div>
<div><svg style="left:57px;top:5px" width="10" height="9"><use href="#pl"/></svg><svg style="left:66px" width="16" height="16"><use href="#vb"/></svg><b style="left:87px">Create.vbhtml</b></div>
<div><svg style="left:57px;top:5px" width="10" height="9"><use href="#pl"/></svg><svg style="left:66px" width="16" height="16"><use href="#vb"/></svg><b style="left:87px">Delete.vbhtml</b></div>
<div><svg style="left:57px;top:5px" width="10" height="9"><use href="#pl"/></svg><svg style="left:66px" width="16" height="16"><use href="#vb"/></svg><b style="left:87px">Details.vbhtml</b></div>
<div><svg style="left:57px;top:5px" width="10" height="9"><use href="#pl"/></svg><svg style="left:66px" width="16" height="16"><use href="#vb"/></svg><b style="left:87px">Edit.vbhtml</b></div>
<div><svg style="left:57px;top:5px" width="10" height="9"><use href="#pl"/></svg><svg style="left:66px" width="16" height="16"><use href="#vb"/></svg><b style="left:87px">Index.vbhtml</b></div>
<div><svg style="left:40px;top:5px" width="8" height="9"><use href="#lk"/></svg><svg style="left:48px" width="16" height="16"><use href="#vb"/></svg><b style="left:69px">_ViewStart.vbhtml</b></div>
<div><svg style="left:40px;top:5px" width="8" height="9"><use href="#lk"/></svg><svg style="left:48px" width="16" height="16"><use href="#wc"/></svg><b style="left:69px">Web.config</b></div>
<div><svg style="left:22px;top:5px" width="8" height="9"><use href="#lk"/></svg><svg style="left:30px" width="16" height="16"><path d="M1 1h6v5H1zM9 9h6v5H9zM6 5l5 5" fill="#333" stroke="#333"/></svg><b class="n3" style="left:51px">ClassDiagram1.cd</b></div>
<div><svg style="left:22px;top:5px" width="8" height="9"><use href="#lk"/></svg><svg style="left:30px" width="16" height="16"><path d="M3.500 1.500h6l3 3v10h-9z" fill="#fff" stroke="#424242"/><circle cx="8" cy="9" r="2" fill="#888"/></svg><b style="left:51px">favicon.ico</b></div>
<div><svg style="left:5px" width="16" height="16"><use href="#ac"/></svg><svg style="left:22px;top:5px" width="8" height="9"><use href="#lk"/></svg><svg style="left:30px" width="16" height="16"><path d="M5.500 1.500h6l3 3v10h-9z" fill="#fff" stroke="#424242"/><circle cx="5" cy="10" r="4" fill="#fff" stroke="#424242"/></svg><b class="n3" style="left:51px">Global.asax</b></div>
<div><svg style="left:22px;top:5px" width="8" height="9"><use href="#lk"/></svg><svg style="left:30px" width="16" height="16"><use href="#wc"/></svg><b style="left:51px">packages.config</b></div>
<div><svg style="left:20px;top:5px" width="10" height="9"><use href="#pl"/></svg><svg style="left:30px" width="16" height="16"><path d="M1.500 2.500h13v11h-13z" fill="#fff" stroke="#424242"/><path d="M2 11l4-4 3 3 2-2 3 3" fill="none" stroke="#424242"/></svg><b style="left:51px">SchoolDB-Diagram.png</b></div>
<div><svg style="left:5px" width="16" height="16"><use href="#ac"/></svg><svg style="left:22px;top:5px" width="8" height="9"><use href="#ck"/></svg><svg style="left:30px" width="16" height="16"><use href="#wc"/></svg><b style="left:51px">Web.config</b></div>
</div>
<div class="p" style="left:1577px;top:158px;width:16px;height:460px;background:#e8e8ec"></div>
<div class="p" style="left:1581px;top:305px;width:9px;height:298px;background:#c2c3c9"></div>
<svg style="left:1577px;top:159px;color:#868999" width="16" height="16"><path d="M3 10l5-5 5 5z" fill="currentColor"/></svg>
<svg style="left:1577px;top:602px;color:#868999" width="16" height="16"><path d="M3 5l5 5 5-5z" fill="currentColor"/></svg>
<div class="tab on" style="left:1206px;top:618px;width:99px">Solution Explorer</div>
<div class="tab" style="left:1305px;top:619px;width:87px">Team Explorer</div>

<!-- properties -->
<div class="bd" style="left:1206px;top:646px;width:387px;height:484px"></div>
<div class="ti" style="left:1206px;top:646px;width:387px;letter-spacing:-.3px">Properties</div>
<svg style="left:1540px;top:648px;color:#d4dbea" width="16" height="16"><use href="#dd"/></svg>
<svg style="left:1557px;top:648px;color:#d4dbea" width="16" height="16"><use href="#pin"/></svg>
<svg style="left:1574px;top:648px;color:#d4dbea" width="16" height="16"><use href="#xx"/></svg>
<div class="w" style="left:1217px;top:671px;letter-spacing:.2px">XML Document</div>
<svg style="left:1578px;top:671px;color:#333" width="16" height="16"><use href="#dd"/></svg>
<div class="p" style="left:1206px;top:692px;width:387px;height:25px;background:#cfd6e6"></div>
<svg style="left:1212px;top:696px" width="16" height="16"><path d="M1 1h5v5H1zM1 9h5v5H1z" fill="#333"/><path d="M8 2h7M8 4h7M8 6h7M8 10h7M8 12h7M8 14h7" stroke="#333"/></svg>
<div class="p" style="left:1232px;top:694px;width:23px;height:22px;background:#f3f5fa;border:1px solid #4d6082;box-sizing:border-box"></div>
<svg style="left:1236px;top:696px" width="16" height="17"><path d="M1 1h7v7H1zM1 9h7v7H1z" fill="#333"/><path d="M12 2v11M9 10l3 4 3-4" stroke="#1c6fd0" stroke-width="2" fill="none"/></svg>
<div class="p" style="left:1258px;top:695px;width:1px;height:19px;background:#9aa5bb"></div>
<svg style="left:1265px;top:696px" width="16" height="16"><path d="M15 3l-3 3-2-2 3-3c-3-1-6 1-5 5L1 12l3 3 6-7c4 1 6-2 5-5z" fill="#a6adbb"/></svg>
<div class="p" style="left:1206px;top:718px;width:15px;height:76px;background:#eeeef3"></div>
<div class="p" style="left:1221px;top:718px;width:151px;height:19px;background:#ebecf1"></div>
<div class="p" style="left:1206px;top:737px;width:387px;height:1px;background:#e3e4e8"></div>
<div class="p" style="left:1206px;top:756px;width:387px;height:1px;background:#e3e4e8"></div>
<div class="p" style="left:1206px;top:775px;width:387px;height:1px;background:#e3e4e8"></div>
<div class="p" style="left:1206px;top:794px;width:387px;height:1px;background:#e3e4e8"></div>
<div class="p" style="left:1372px;top:718px;width:1px;height:76px;background:#e3e4e8"></div>
<div class="pr" style="top:718px">Encoding</div><div class="pr" style="top:737px">Output</div><div class="pr" style="top:756px">Schemas</div><div class="pr" style="top:775px">Stylesheet</div>
<div class="pv" style="top:718px">Unicode (UTF-8)</div>
<div class="pv" style="top:756px;letter-spacing:-.1px">"C:\Program Files (x86)\Microsoft Visual Studio</div>
<div class="p" style="left:1206px;top:1067px;width:387px;height:1px;background:#e3e4e8"></div>
<div class="w" style="left:1295px;top:1061px;font-size:20px;line-height:26px;color:#c9cacf">Activate Windows</div>
<div class="w" style="left:1295px;top:1087px;font-size:15px;line-height:18px;color:#c9cacf">Go to Settings to activate Windows.</div>
<div class="w" style="left:1212px;top:1074px;font-weight:bold;color:#000">Encoding</div>
<div class="w" style="left:1212px;top:1092px;color:#000">Character encoding of the document.</div>

<!-- status -->
<div class="p" style="left:0;top:1137px;width:1600px;height:22px;background:#ca5100"></div>
<svg style="left:5px;top:1141px" width="16" height="14"><path d="M4.500 1.500h10l-2 11h-10z" fill="none" stroke="#fff" stroke-width="1.300"/></svg>
<div class="st" style="left:28px">Ready</div><div class="st" style="left:840px">Ln 76</div><div class="st" style="left:932px">Col 9</div><div class="st" style="left:1024px">Ch 100</div><div class="st" style="left:1161px">INS</div>
<svg style="left:1311px;top:1141px" width="16" height="16"><path d="M8 15V3M4 7l4-5 4 5" fill="none" stroke="#fbd7c0" stroke-width="2"/></svg>
<div class="st" style="left:1332px">7</div>
<svg style="left:1361px;top:1141px" width="16" height="16"><path d="M3 14l1-4 7-8 3 2-7 8z" fill="#fbd7c0"/></svg>
<div class="st" style="left:1382px">12</div>
<svg style="left:1417px;top:1141px" width="16" height="16"><path d="M8 0l7 8-7 8-7-8z" fill="#fbeadd"/><path d="M8 4v8M8 4l3 4" stroke="#ca5100" stroke-width="1.300" fill="none"/></svg>
<div class="st" style="left:1439px">CU-VB-3</div>
<svg style="left:1507px;top:1141px" width="16" height="16"><path d="M3 2l5 7 5-7M8 9v6" fill="none" stroke="#fbeadd" stroke-width="2.500"/></svg>
<div class="st" style="left:1529px">master</div>
<svg style="left:1567px;top:1141px" width="14" height="14"><path d="M3 9l4-4 4 4z" fill="#fff"/></svg>
</body></html>
